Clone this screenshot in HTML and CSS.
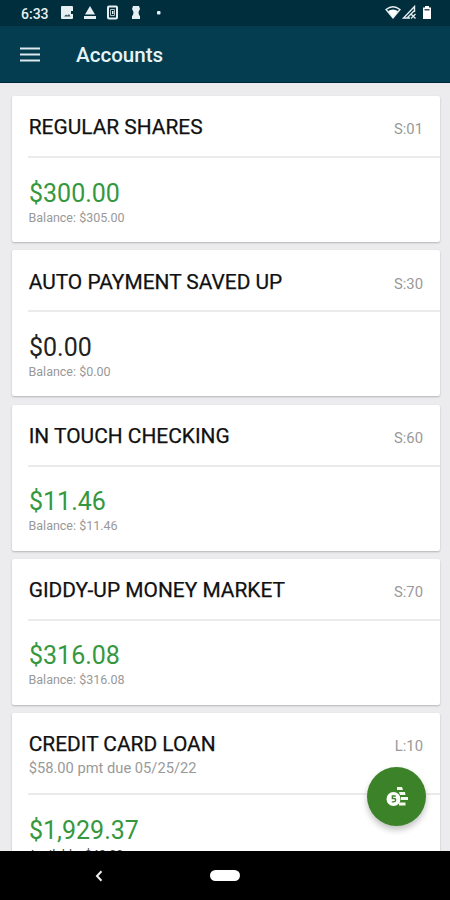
FILE: index.html
```html
<!DOCTYPE html>
<html lang="en">
<head>
<meta charset="utf-8">
<title>Accounts</title>
<link rel="stylesheet" href="styles.css">
</head>
<body>
<div class="screen">
  <div class="status">
    <span class="time">6:33</span>
    <svg class="notifications" width="104" height="16" viewBox="0 0 104 16" fill="#e6eff1">
      <path d="M2 1h10a1 1 0 0 1 1 1v4h-2v3h2v4a1 1 0 0 1-1 1H2a1 1 0 0 1-1-1V2a1 1 0 0 1 1-1z"/>
      <path d="M4 11.500l2-2 1.500 1L9 9l1.500 2.500z" fill="#2f5561"/>
      <path d="M30 1l5 8.500H25zM24 11h12v3H24z"/>
      <rect x="48" y="1.500" width="9" height="12" rx="1" fill="none" stroke="#e6eff1" stroke-width="2"/>
      <path d="M50.500 4.500h4v6h-4z" fill="none" stroke="#a9bdc4"/>
      <path d="M52 6h1.500v3H52z"/>
      <path d="M73 1h6l1 3-1.500 3 .5 3 1 1v3h-8v-3l1-1 .5-3L72 4z"/>
      <rect x="97" y="6" width="3.500" height="3.500" rx="1"/>
    </svg>
    <svg class="signals" width="50" height="16" viewBox="0 0 50 16">
      <path d="M1 4.500Q8 -1 15 4.500L8 13z" fill="none" stroke="#e6eff1" stroke-width="1.300"/>
      <path d="M3 6Q8 3 13 6L8 13z" fill="#fff"/>
      <path d="M29.500 7V1.500L18.500 13H25M22.500 12.500L29 6" fill="none" stroke="#e6eff1" stroke-width="1.400"/>
      <path d="M26 9l4.500 4.500m0-4.500L26 13.500" stroke="#e6eff1" stroke-width="1.300"/>
      <path d="M40 1h4v1.500h2V14h-8V2.500h2z" fill="#fff"/>
      <path d="M39.500 4h5v1.500h-5z" fill="#38515b"/>
    </svg>
  </div>
  <header class="toolbar">
    <svg width="20" height="15" viewBox="0 0 20 15" fill="#dce9ed"><path d="M0 .5h20v2H0zM0 6.500h20v2H0zM0 12.500h20v2H0z"/></svg>
    <h1>Accounts</h1>
  </header>
  <main class="accounts">
    <section class="card">
      <div class="head"><div><h2>REGULAR SHARES</h2></div><span class="code">S:01</span></div>
      <div class="body"><div class="amount">$300.00</div><div class="balance">Balance: $305.00</div></div>
    </section>
    <section class="card">
      <div class="head"><div><h2>AUTO PAYMENT SAVED UP</h2></div><span class="code">S:30</span></div>
      <div class="body"><div class="amount zero">$0.00</div><div class="balance">Balance: $0.00</div></div>
    </section>
    <section class="card">
      <div class="head"><div><h2>IN TOUCH CHECKING</h2></div><span class="code">S:60</span></div>
      <div class="body"><div class="amount">$11.46</div><div class="balance">Balance: $11.46</div></div>
    </section>
    <section class="card">
      <div class="head"><div><h2>GIDDY-UP MONEY MARKET</h2></div><span class="code">S:70</span></div>
      <div class="body"><div class="amount">$316.08</div><div class="balance">Balance: $316.08</div></div>
    </section>
    <section class="card">
      <div class="head loan"><div><h2>CREDIT CARD LOAN</h2><p class="due">$58.00 pmt due 05/25/22</p></div><span class="code">L:10</span></div>
      <div class="body"><div class="amount">$1,929.37</div><div class="balance available">Available: $42.00</div></div>
    </section>
  </main>
  <div class="fab">
    <svg width="22" height="22" viewBox="0 0 22 22">
      <path d="M11 1h5l1 3h-6zM13 6h6l.5 3H14zM15 11h7v3h-7zM13 16.500h6.500v3H13z" fill="#f2faee"/>
      <circle cx="7.500" cy="13" r="7" fill="#fff"/>
      <path d="M9.800 10H6.300v2.500h1.400q2 0 2 1.600T7.700 15.800H5.800" fill="none" stroke="#3c8229" stroke-width="1.300"/>
    </svg>
  </div>
  <nav class="navbar">
    <svg class="back" width="8" height="12" viewBox="0 0 8 12"><path d="M6.500 1.300L2 6l4.500 4.700" fill="none" stroke="#eee" stroke-width="2"/></svg>
    <span class="home"></span>
  </nav>
</div>
</body>
</html>
```
FILE: styles.css
```css
* { box-sizing: border-box; }
body { margin: 0; font-family: Roboto, "Liberation Sans", sans-serif; }
h1, h2, p { margin: 0; }
svg { display: block; }
.screen {
  position: relative;
  width: 450px;
  height: 900px;
  overflow: hidden;
  display: flex;
  flex-direction: column;
  background: #ececee;
}
.status {
  flex: none;
  height: 26px;
  display: flex;
  align-items: center;
  padding: 0 15px 0 21px;
  background: #002e3d;
}
.time { width: 39px; padding-top: 1px; color: #e6eff1; font-size: 14px; font-weight: 500; line-height: 16px; }
.signals { margin-left: auto; }
.toolbar {
  flex: none;
  height: 57px;
  display: flex;
  align-items: center;
  gap: 36px;
  padding: 0 20px;
  background: #033d4f;
  border-bottom: 1px solid #00263a;
}
.toolbar h1 { padding-top: 2px; color: #e6f4f7; font-size: 20.6px; font-weight: 500; line-height: 24px; }
.accounts {
  flex: 1;
  min-height: 0;
  overflow: hidden;
  display: flex;
  flex-direction: column;
  gap: 8.25px;
  padding: 13px 10px 0 12px;
}
.card {
  flex: none;
  height: 146px;
  background: #fff;
  border-radius: 2px;
  box-shadow: 0 1px 2px rgba(0, 0, 0, .24);
}
.head {
  height: 62px;
  display: flex;
  justify-content: space-between;
  margin-left: 16px;
  padding: 19.4px 17px 0 .7px;
  border-bottom: 2px solid #ebebeb;
}
.loan { height: 82px; }
.head h2 {
  color: #111;
  font-size: 20.9px;
  font-weight: 400;
  line-height: 24px;
  white-space: nowrap;
  -webkit-text-stroke: .25px #111;
}
.code { margin-top: 5px; color: #999; font-size: 14.8px; line-height: 18px; }
.due { color: #999; font-size: 14.7px; line-height: 24px; }
.body { padding: 20.6px 17px 0 17px; }
.amount { color: #36983e; font-size: 25px; line-height: 30px; }
.zero { color: #222; }
.balance { margin-left: -.5px; color: #999; font-size: 12.5px; line-height: 17px; }
.available { color: #444; }
.navbar {
  position: relative;
  flex: none;
  height: 49px;
  display: flex;
  align-items: center;
  justify-content: center;
  background: #000;
}
.back { position: absolute; left: 95px; top: 19px; }
.home { width: 30px; height: 11px; border-radius: 6px; background: #fff; }
.fab {
  position: absolute;
  left: 367px;
  top: 767px;
  width: 59px;
  height: 59px;
  display: flex;
  align-items: center;
  justify-content: center;
  border-radius: 50%;
  background: #3c8229;
  box-shadow: 0 4px 6px rgba(0, 0, 0, .24);
}
```
